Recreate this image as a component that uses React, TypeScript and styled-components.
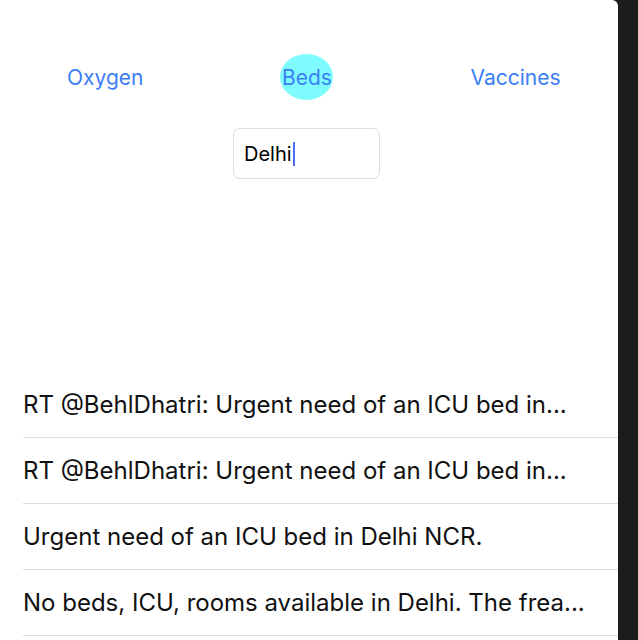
import React from "react";
import styled, { createGlobalStyle } from "styled-components";

const Global = createGlobalStyle`
  html, body { margin: 0; padding: 0; background: #1c1c1c; }
  body { font-family: Inter, "Noto Sans", sans-serif; }
`;

const Screen = styled.div`
  width: 638px;
  height: 640px;
  background: #1c1c1c;
  display: flex;
  overflow: hidden;
`;

const Panel = styled.div`
  width: 618px;
  height: 640px;
  background: #ffffff;
  border-top-right-radius: 6px;
  display: flex;
  flex-direction: column;
  overflow: hidden;
`;

const Tabs = styled.div`
  display: flex;
  align-items: center;
  padding: 54px 0 0 67px;
  height: 46px;
  gap: 137px;
`;

const Tab = styled.button<{ $active?: boolean }>`
  border: none;
  background: ${(p) => (p.$active ? "#7efcfd" : "transparent")};
  border-radius: 50%;
  height: 46px;
  padding: 0;
  width: ${(p) => (p.$active ? "53px" : "auto")};
  font-family: Inter, "Noto Sans", sans-serif;
  font-size: 21px;
  color: #3b7ef6;
  display: flex;
  align-items: center;
  justify-content: center;
  white-space: nowrap;
  cursor: pointer;
`;

const InputRow = styled.div`
  display: flex;
  justify-content: center;
  padding: 28px 5px 0 0;
`;

const Field = styled.div`
  width: 135px;
  height: 49px;
  border: 1px solid #dedede;
  border-radius: 7px;
  display: flex;
  align-items: center;
  padding-left: 10px;
  box-sizing: content-box;
  font-size: 20px;
  color: #000;
`;

const Caret = styled.span`
  display: inline-block;
  width: 2px;
  height: 24px;
  background: #4a6cf7;
  margin-left: 1px;
`;

const List = styled.div`
  margin-top: 193px;
  display: flex;
  flex-direction: column;
`;

const Row = styled.div`
  height: 66px;
  display: flex;
  align-items: center;
  margin-left: 23px;
  border-bottom: 1px solid #dcdcdc;
  box-sizing: border-box;
  font-size: 24px;
  color: #111;
  white-space: nowrap;
`;

const items = [
  "RT @BehlDhatri: Urgent need of an ICU bed in...",
  "RT @BehlDhatri: Urgent need of an ICU bed in...",
  "Urgent need of an ICU bed in Delhi NCR.",
  "No beds, ICU, rooms available in Delhi. The frea...",
];

export default function App() {
  return (
    <>
      <Global />
      <Screen>
        <Panel>
          <Tabs>
            <Tab>Oxygen</Tab>
            <Tab $active>Beds</Tab>
            <Tab>Vaccines</Tab>
          </Tabs>
          <InputRow>
            <Field>
              Delhi
              <Caret />
            </Field>
          </InputRow>
          <List>
            {items.map((t, i) => (
              <Row key={i}>{t}</Row>
            ))}
          </List>
        </Panel>
      </Screen>
    </>
  );
}
